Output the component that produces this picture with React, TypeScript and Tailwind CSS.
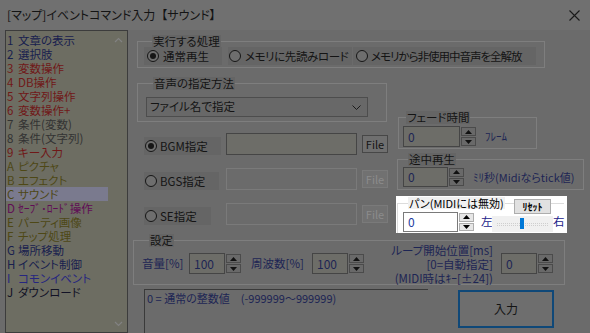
import React from "react";

const NAVY = "text-[#1d2554]";
const DARK = "text-[#141414]";

function Arrow({ up, color }: { up: boolean; color: string }) {
  return (
    <svg width="7" height="4" viewBox="0 0 7 4">
      <path d={up ? "M3.5 0L7 4H0Z" : "M0 0H7L3.5 4Z"} fill={color} />
    </svg>
  );
}

function Spin({ bright = false }: { bright?: boolean }) {
  const box = bright ? "border-[#adadad] bg-[#e6e6e6]" : "border-[#4b4b4b] bg-[#696969]";
  const col = bright ? "#000" : "#111";
  return (
    <div className="flex h-full w-[16px] flex-col gap-[1px] py-[1px] pl-[1px]">
      <div className={`flex flex-1 items-center justify-center border ${box}`}>
        <Arrow up color={col} />
      </div>
      <div className={`flex flex-1 items-center justify-center border ${box}`}>
        <Arrow up={false} color={col} />
      </div>
    </div>
  );
}

function NumBox({ w, h, value, bright = false }: { w: string; h: string; value: string; bright?: boolean }) {
  return (
    <div className={`flex ${h}`}>
      <div
        className={`flex items-center border pl-[4px] text-[12px] ${w} ${
          bright ? "border-[#7a7a7a] bg-white text-[#1c3aa0]" : "border-[#454545] bg-[#6d6d68] text-[#1d2554]"
        }`}
      >
        {value}
      </div>
      <Spin bright={bright} />
    </div>
  );
}

function Radio({
  label,
  checked = false,
  w,
  pl,
  gap,
  ml = "",
  track = "",
}: {
  label: string;
  checked?: boolean;
  w: string;
  pl: string;
  gap: string;
  ml?: string;
  track?: string;
}) {
  return (
    <div className={`flex h-[18px] items-center bg-[#656565] ${w} ${pl} ${ml}`}>
      <span className="flex h-[12px] w-[12px] shrink-0 items-center justify-center rounded-full border border-[#161616] bg-[#6e6e6e]">
        {checked && <span className="h-[6px] w-[6px] rounded-full bg-[#161616]" />}
      </span>
      <span className={`${gap} ${track} whitespace-nowrap text-[11.5px] leading-[14px] ${DARK}`}>{label}</span>
    </div>
  );
}

function Legend({ children, ml }: { children: React.ReactNode; ml: string }) {
  return <legend className={`${ml} bg-[#656565] px-[1px] text-[11.5px] leading-[13px] ${DARK}`}>{children}</legend>;
}

function FileBtn({ disabled = false }: { disabled?: boolean }) {
  return (
    <div
      className={`ml-[5px] flex h-[18px] w-[26px] items-center justify-center border text-[11px] ${
        disabled ? "border-[#7a7a7a] bg-[#717171] text-[#8c8c8c]" : "border-[#474747] bg-[#6f6f6f] text-[#141414]"
      }`}
    >
      File
    </div>
  );
}

const items: [string, string, string][] = [
  ["1", "文章の表示", "text-[#18204e]"],
  ["2", "選択肢", "text-[#18204e]"],
  ["3", "変数操作", "text-[#701818]"],
  ["4", "DB操作", "text-[#701818]"],
  ["5", "文字列操作", "text-[#701818]"],
  ["6", "変数操作+", "text-[#701818]"],
  ["7", "条件(変数)", "text-[#333333]"],
  ["8", "条件(文字列)", "text-[#333333]"],
  ["9", "キー入力", "text-[#701818]"],
  ["A", "ピクチャ", "text-[#4e4816]"],
  ["B", "エフェクト", "text-[#4e4816]"],
  ["C", "サウンド", "text-[#4e4816]"],
  ["D", "ｾｰﾌﾞ･ﾛｰﾄﾞ操作", "text-[#600c56]"],
  ["E", "パーティ画像", "text-[#4e4816]"],
  ["F", "チップ処理", "text-[#4e4816]"],
  ["G", "場所移動", "text-[#18204e]"],
  ["H", "イベント制御", "text-[#18204e]"],
  ["I", "コモンイベント", "text-[#262680]"],
  ["J", "ダウンロード", "text-[#121226]"],
];

function Chevron({ up }: { up: boolean }) {
  return (
    <svg width="9" height="6" viewBox="0 0 9 6">
      <polyline points={up ? "1,5 4.5,1.5 8,5" : "1,1 4.5,4.5 8,1"} fill="none" stroke="#828282" strokeWidth="1.2" />
    </svg>
  );
}

export default function App() {
  return (
    <div className="flex h-[333px] w-[590px] flex-col overflow-hidden bg-[#6b6b6b] font-['Noto_Sans_CJK_JP','Noto_Sans',sans-serif] [font-feature-settings:'palt']">
      {/* title bar */}
      <div className="flex h-[30px] shrink-0 items-center justify-between bg-[#707070] pl-[7px] pr-[10px]">
        <div className={`text-[12px] leading-[14px] ${DARK}`}>
          [マップ]イベントコマンド入力<span className="ml-[6px]">【サウンド】</span>
        </div>
        <svg width="11" height="11" viewBox="0 0 11 11">
          <path d="M0.5 0.5L10.5 10.5M10.5 0.5L0.5 10.5" stroke="#1a1a1a" strokeWidth="1.1" />
        </svg>
      </div>

      {/* body */}
      <div className="flex flex-1 pl-[5px]">
        {/* list */}
        <div className="flex h-[303px] w-[123px] shrink-0 border border-[#3c3c3c] bg-[#6d6d62]">
          <div className="flex w-[104px] flex-col pt-[2px]">
            {items.map(([k, t, c]) => (
              <div
                key={k}
                className={`flex h-[14px] w-[102px] items-center pl-[1px] text-[11.5px] leading-[14px] ${c} ${
                  k === "C" ? "bg-[#7a7a8e]" : ""
                }`}
              >
                <span className="w-[11px] shrink-0">{k}</span>
                <span className="whitespace-nowrap">{t}</span>
              </div>
            ))}
          </div>
          <div className="flex flex-1 flex-col items-center justify-between">
            <div className="flex h-[17px] items-center">
              <Chevron up />
            </div>
            <div className="flex h-[17px] items-center">
              <Chevron up={false} />
            </div>
          </div>
        </div>

        {/* right panel */}
        <div className="flex flex-col pl-[9px] pt-[5px]">
          {/* group 1 */}
          <fieldset className="w-[408px] border border-[#7e7e7e] pb-[2px] pl-[6px]">
            <Legend ml="ml-[8px]">実行する処理</Legend>
            <div className="-mt-[1px] flex">
              <Radio label="通常再生" checked w="w-[78px]" pl="pl-[3px]" gap="ml-[4px]" />
              <Radio label="メモリに先読みロード" w="w-[124px]" pl="pl-[1px]" gap="ml-[4px]" ml="ml-[6px]" track="tracking-[-0.4px]" />
              <Radio
                label="メモリから非使用中音声を全解放"
                w="w-[183px]"
                pl="pl-[3px]"
                gap="ml-[3px]"
                ml="ml-[1px]"
                track="tracking-[-1px]"
              />
            </div>
          </fieldset>

          {/* middle */}
          <div className="mt-[9px] flex">
            {/* left column */}
            <div className="flex w-[259px] flex-col">
              <fieldset className="w-[250px] border border-[#7e7e7e] pb-[4px] pl-[8px]">
                <Legend ml="ml-[7px]">音声の指定方法</Legend>
                <div className="mt-[7px] flex h-[20px] w-[222px] items-center justify-between border border-[#4d4d4d] bg-[#686868] pl-[3px] pr-[6px]">
                  <span className={`text-[11.5px] ${DARK}`}>ファイル名で指定</span>
                  <svg width="9" height="5" viewBox="0 0 9 5">
                    <polyline points="0.5,0.5 4.5,4.5 8.5,0.5" fill="none" stroke="#1a1a1a" strokeWidth="1" />
                  </svg>
                </div>
              </fieldset>
              <div className="mt-[11px] flex flex-col gap-[13px] pl-[7px]">
                {[
                  { l: "BGM指定", c: true, w: "w-[77px]", d: false },
                  { l: "BGS指定", c: false, w: "w-[75px]", d: true },
                  { l: "SE指定", c: false, w: "w-[67px]", d: true },
                ].map((r) => (
                  <div key={r.l} className="flex h-[22px] items-center">
                    <div className="mt-[3px] w-[82px]">
                      <Radio label={r.l} checked={r.c} w={r.w} pl="pl-[1px]" gap="ml-[3px]" />
                    </div>
                    <div
                      className={`h-[22px] w-[131px] border ${
                        r.d ? "border-[#7a7a7a] bg-[#6b6b6b]" : "border-[#454545] bg-[#6d6d68]"
                      }`}
                    />
                    <FileBtn disabled={r.d} />
                  </div>
                ))}
              </div>
            </div>

            {/* right column */}
            <div className="flex flex-col pt-[34px]">
              <fieldset className="ml-[2px] w-[139px] border border-[#7e7e7e] pb-[1px] pl-[4px]">
                <Legend ml="ml-[3px]">フェード時間</Legend>
                <div className="mt-[2px] flex items-center">
                  <NumBox w="w-[57px]" h="h-[21px]" value="0" />
                  <span className={`ml-[9px] text-[11px] ${NAVY}`}>ﾌﾚｰﾑ</span>
                </div>
              </fieldset>
              <fieldset className="ml-[1px] mt-[4px] w-[187px] border border-[#7e7e7e] pb-[2px] pl-[5px]">
                <Legend ml="ml-[5px]">途中再生</Legend>
                <div className="mt-[1px] flex items-center">
                  <NumBox w="w-[45px]" h="h-[20px]" value="0" />
                  <span className={`ml-[9px] whitespace-nowrap text-[11px] ${NAVY}`}>ﾐﾘ秒(Midiならtick値)</span>
                </div>
              </fieldset>

              {/* highlighted pan */}
              <div className="relative mt-[6px] h-[37px] w-[171px] bg-white pl-[1px] pt-[1px]">
                <fieldset className="h-[36px] w-[167px] border-l border-t border-[#dcdcdc] pl-[5px]">
                  <legend className="ml-[5px] bg-[#f0f0f0] px-[1px] text-[11px] leading-[12px] text-black">
                    パン(MIDIには無効)
                  </legend>
                  <div className="mt-[3px] flex h-[20px] items-center">
                    <NumBox w="w-[55px]" h="h-[20px]" value="0" bright />
                    <span className="ml-[7px] w-[11px] text-[11.5px] text-[#22228a]">左</span>
                    <div className="flex h-[16px] w-[61px] items-center self-end bg-[#f0f0f0] px-[5px]">
                      <div className="relative h-[3px] w-full border border-dotted border-[#cfcfcf]">
                        <div className="absolute left-[22px] top-[-6px] h-[11px] w-[4px] bg-[#0078d7]" />
                      </div>
                    </div>
                    <span className="w-[11px] text-[11.5px] text-[#22228a]">右</span>
                  </div>
                </fieldset>
                <div className="absolute left-[118px] top-[3px] flex h-[15px] w-[37px] items-center justify-center border border-[#adadad] bg-[#e1e1e1] text-[10px] font-bold text-black">
                  ﾘｾｯﾄ
                </div>
              </div>
            </div>
          </div>

          {/* settings */}
          <fieldset className="-ml-[4px] mt-[1px] w-[432px] border border-[#7e7e7e] pb-[10px] pl-[8px]">
            <Legend ml="ml-[7px]">設定</Legend>
            <div className="mt-[6px] flex h-[21px] items-center">
              <span className={`w-[47px] text-[11.5px] ${NAVY}`}>音量[%]</span>
              <NumBox w="w-[36px]" h="h-[21px]" value="100" />
              <span className={`ml-[10px] w-[61px] text-[11.5px] ${NAVY}`}>周波数[%]</span>
              <NumBox w="w-[36px]" h="h-[21px]" value="100" />
              <div className={`ml-[4px] w-[125px] text-right text-[11.5px] leading-[14px] ${NAVY}`}>
                <div>ループ開始位置[ms]</div>
                <div>[0=自動指定]</div>
                <div className="whitespace-nowrap">(MIDI時はｷｰ[±24])</div>
              </div>
              <div className="ml-[8px]">
                <NumBox w="w-[36px]" h="h-[21px]" value="0" />
              </div>
            </div>
          </fieldset>

          {/* bottom */}
          <div className="mt-[4px] flex pl-[7px]">
            <div className={`h-[50px] w-[284px] border-l border-t border-[#3a3a3a] pl-[2px] pt-[1px] text-[11px] leading-[14px] ${NAVY}`}>
              0 = 通常の整数値　(-999999～999999)
            </div>
            <div className={`ml-[30px] mt-[1px] flex h-[38px] w-[96px] items-center justify-center border-2 border-[#0f4878] bg-[#6e6e6e] text-[12px] ${DARK}`}>
              入力
            </div>
          </div>
        </div>
      </div>
    </div>
  );
}
